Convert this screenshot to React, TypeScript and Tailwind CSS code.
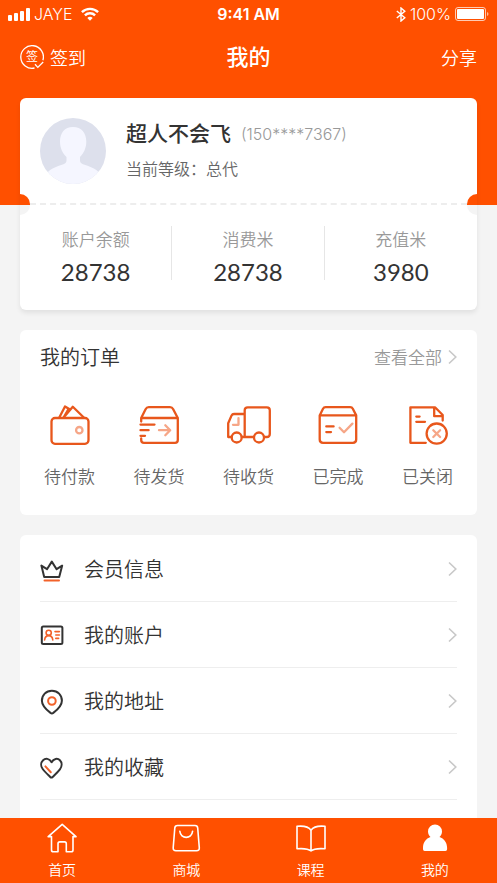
import type { ReactNode } from 'react';

const cjk = "font-['Noto_Sans_CJK_SC',sans-serif]";
const latin = "font-['Inter','Noto_Sans_CJK_SC',sans-serif]";

function OrderIcon({ width = 40, children }: { width?: number; children: ReactNode }) {
  return (
    <svg
      width={width}
      height={40}
      viewBox={`0 0 ${width} 40`}
      fill="none"
      stroke="#e8571c"
      strokeWidth={2.3}
      strokeLinecap="round"
      strokeLinejoin="round"
      aria-hidden="true"
    >
      {children}
    </svg>
  );
}

function RowIcon({ children }: { children: ReactNode }) {
  return (
    <svg
      width={24}
      height={24}
      viewBox="0 0 24 24"
      fill="none"
      stroke="#333333"
      strokeWidth={2}
      strokeLinecap="round"
      strokeLinejoin="round"
      className="shrink-0 overflow-visible"
      aria-hidden="true"
    >
      {children}
    </svg>
  );
}

function TabIcon({ children }: { children: ReactNode }) {
  return (
    <svg
      width={30}
      height={30}
      viewBox="0 0 30 30"
      fill="none"
      stroke="#ffffff"
      strokeWidth={1.6}
      strokeLinecap="round"
      strokeLinejoin="round"
      aria-hidden="true"
    >
      {children}
    </svg>
  );
}

function Chevron() {
  return (
    <svg width={9} height={16} viewBox="0 0 9 16" fill="none" stroke="#c8c8c8" strokeWidth={1.6} aria-hidden="true">
      <path d="M1 1.5 7.8 8 1 14.5" />
    </svg>
  );
}

const soft = '#f6a687';
const accent = '#f2622a';

const stats = [
  { label: '账户余额', value: '28738' },
  { label: '消费米', value: '28738' },
  { label: '充值米', value: '3980' },
];

const orders = [
  {
    label: '待付款',
    icon: (
      <OrderIcon>
        <rect x="1.5" y="13" width="37" height="25.8" rx="3.5" />
        <path d="M9.3 12.5 15 1.5l4.2 2.6M13.6 12.5 22.8 1.8 33.8 12.5M13.6 12.5l4.6-8" />
        <circle cx="29.3" cy="25.2" r="3.2" stroke={soft} />
      </OrderIcon>
    ),
  },
  {
    label: '待发货',
    icon: (
      <OrderIcon>
        <path d="M2.2 16.5V13L6.6 4.2Q7.6 2.2 9.8 2.2H31q2.2 0 3.2 2L38.8 13v22q0 2.8-2.8 2.8H5q-2.8 0-2.8-2.8v-1.5M2.2 13H38.8" />
        <path d="M1.5 19.6H15.5M1.5 25.2H9.6M1.5 30.8H6" />
        <path d="M20 25.2H31M26.3 20.2l4.9 5-4.9 5" stroke={soft} />
      </OrderIcon>
    ),
  },
  {
    label: '待收货',
    icon: (
      <OrderIcon width={44}>
        <path d="M4.7 32H1.2V18.3L4.6 10.4Q5.3 9 7 9H17.7M14.7 32H27M17.7 32V5.3q0-3 3-3H39.8q3 0 3 3V29q0 3-3 3H37" />
        <circle cx="9.7" cy="32.5" r="5" />
        <circle cx="32" cy="32.5" r="5" />
        <path d="M11.5 13.2V19.8H6" stroke={soft} />
      </OrderIcon>
    ),
  },
  {
    label: '已完成',
    icon: (
      <OrderIcon>
        <path d="M1.7 10.4 5 3.8Q5.8 2.2 7.6 2.2H32.2q1.8 0 2.6 1.6l3.4 6.6V34.5q0 3.3-3.3 3.3H5q-3.3 0-3.3-3.3ZM1.7 10.4H38.2" />
        <path d="M8.3 21.4H15.6M8.3 27.1H13" />
        <path d="M21.6 22.8 26 27.2 34.4 18.6" stroke={soft} />
      </OrderIcon>
    ),
  },
  {
    label: '已关闭',
    icon: (
      <OrderIcon>
        <path d="M17.8 37.8H2.4V2.3H27L34.7 10V15.5M26.2 2.6V11.2H34.5" />
        <path d="M8.3 11.6H11.6M8.3 16.8H17" />
        <circle cx="28.7" cy="28.6" r="10.1" />
        <path d="m25.3 25.2 6.8 6.8M32.1 25.2l-6.8 6.8" stroke={soft} />
      </OrderIcon>
    ),
  },
];

const rows = [
  {
    label: '会员信息',
    icon: (
      <RowIcon>
        <path d="M1.4 8.6 4.2 20H19.2L22.2 8.6 16.6 12.2 11.8 4.6 7 12.2Z" />
        <path d="M4.5 23.4H19" stroke={accent} />
      </RowIcon>
    ),
  },
  {
    label: '我的账户',
    icon: (
      <RowIcon>
        <rect x="1.8" y="3.6" width="20.6" height="17.4" rx="1.5" />
        <g stroke={accent} strokeWidth={1.6}>
          <circle cx="8.7" cy="9.8" r="2.6" />
          <path d="M4.6 17q.5-4.4 4.1-4.4t4.1 4.4M15 8.6H19.4M15.8 12H19.4M15.8 15.4H18.6" />
        </g>
      </RowIcon>
    ),
  },
  {
    label: '我的地址',
    icon: (
      <RowIcon>
        <path d="M11.9 1.8C6 1.8 1.9 6 1.9 11.7c0 5 5.2 9.6 8.6 12.2q1.4 1 2.8 0c3.4-2.6 8.6-7.2 8.6-12.2 0-5.7-4.1-9.9-10-9.9Z" />
        <circle cx="11.9" cy="12" r="3.8" stroke={accent} />
      </RowIcon>
    ),
  },
  {
    label: '我的收藏',
    icon: (
      <RowIcon>
        <path d="M11.6 7.2C9.4 3.2 5.4 3 3.1 5.2.6 7.6.7 11.4 2.7 14c2 2.7 4.9 5.4 7.5 8q1.2 1.2 2.4 0c2.6-2.6 5.3-5.1 7.3-7.7 2.1-2.8 2.4-6.5 0-9C17.7 3 13.6 3.4 11.6 7.2Z" />
        <path d="m5.4 11.4 5.4 5.8" stroke={accent} />
      </RowIcon>
    ),
  },
];

const tabs = [
  {
    label: '首页',
    icon: (
      <TabIcon>
        <path d="M1.2 13.6 15.2 1.3 29 13.6M1.2 13.6H4.5V27q0 1.8 1.8 1.8H11V20.7q0-1.8 1.8-1.8H17.5q1.8 0 1.8 1.8V28.8H24.2q1.8 0 1.8-1.8V13.6H29" />
      </TabIcon>
    ),
  },
  {
    label: '商城',
    icon: (
      <TabIcon>
        <path d="M6.5 2.5H24q2.5 0 2.7 2.5L28.3 24.7q.2 3-2.8 3H5q-3 0-2.8-3L3.8 5Q4 2.5 6.5 2.5Z" />
        <path d="M8.8 8.2c.8 8.2 12 8.2 12.8 0" />
      </TabIcon>
    ),
  },
  {
    label: '课程',
    icon: (
      <TabIcon>
        <path d="M1 3.3Q11.5 2.2 15 7.2 18.5 2.2 29 3.3V25.8Q18.5 25 15 28 11.5 25 1 25.8ZM15 7.2V28" />
      </TabIcon>
    ),
  },
  {
    label: '我的',
    active: true,
    icon: (
      <TabIcon>
        <path
          d="M15 1.4a7 7 0 0 1 7 7c0 2.3-1.2 4.2-2.5 5.5 4.5 1.5 7.6 5.5 7.6 10.8v1.6q0 1.7-1.7 1.7H4.7Q3 28 3 26.3v-1.6c0-5.3 3-9.3 7.5-10.8C9.2 12.6 8 10.7 8 8.4a7 7 0 0 1 7-7Z"
          fill="#ffffff"
          stroke="none"
        />
      </TabIcon>
    ),
  },
];

function StatusBar() {
  return (
    <div className={`grid h-7 grid-cols-3 items-center px-2 text-base leading-7 ${latin}`}>
      <div className="flex items-center gap-1">
        <svg width={22} height={13} viewBox="0 0 22 13" fill="#ffffff" aria-hidden="true">
          <rect x="0" y="7" width="4" height="6" rx="1" />
          <rect x="6" y="5" width="4" height="8" rx="1" />
          <rect x="12" y="3" width="4" height="10" rx="1" />
          <rect x="18" y="0" width="4" height="13" rx="1" />
        </svg>
        <span>JAYE</span>
        <svg width={18} height={14} viewBox="0 0 18 14" fill="none" stroke="#ffffff" strokeWidth={2.4} className="ml-1" aria-hidden="true">
          <path d="M.9 5.2a11.5 11.5 0 0 1 16.2 0M3.9 8.4a7.3 7.3 0 0 1 10.2 0" />
          <path d="M9 13.8 6.3 11a3.8 3.8 0 0 1 5.4 0Z" fill="#ffffff" stroke="none" />
        </svg>
      </div>
      <span className="text-center font-semibold">9:41 AM</span>
      <div className="flex items-center justify-end gap-1">
        <svg width={10} height={15} viewBox="0 0 10 15" fill="none" stroke="#ffffff" strokeWidth={1.4} className="shrink-0" aria-hidden="true">
          <path d="M.8 4 8.8 10.8 5 14V1L8.8 4.2.8 11" />
        </svg>
        <span>100%</span>
        <svg width={34} height={14} viewBox="0 0 34 14" fill="none" className="shrink-0" aria-hidden="true">
          <rect x=".5" y=".5" width="30" height="13" rx="2.5" stroke="#ffffff" strokeOpacity=".7" />
          <rect x="2" y="2" width="27" height="10" rx="1" fill="#ffffff" />
          <path d="M32 5v4q1.5-.5 1.5-2T32 5Z" fill="#ffffff" fillOpacity=".6" />
        </svg>
      </div>
    </div>
  );
}

export default function App() {
  return (
    <div className={`flex min-h-screen flex-col bg-[#f4f4f4] font-[350] text-[#333333] ${cjk}`}>
      <header className="bg-[#ff5000] pb-[119px] text-white">
        <StatusBar />
        <div className="grid h-[58px] grid-cols-3 items-center px-5 text-lg">
          <button type="button" className="flex items-center gap-[6px]">
            <span className="relative flex size-6 justify-center text-[12px] leading-[22px] font-normal">
              签
              <svg width={24} height={24} viewBox="0 0 24 24" fill="none" stroke="#ffffff" strokeWidth={1.3} className="absolute inset-0" aria-hidden="true">
                <path d="M14.5 23A11.3 11.3 0 1 1 22.9 15.3M15 19.2l2.8 3.2 5.4-5.4" />
              </svg>
            </span>
            <span>签到</span>
          </button>
          <h1 className="pb-1 text-center text-[22px] font-medium">我的</h1>
          <button type="button" className="justify-self-end">分享</button>
        </div>
      </header>

      <main className="-mt-[107px] flex grow flex-col gap-5 px-5">
        <section className="relative rounded-md bg-white shadow-[0_3px_5px_rgba(0,0,0,0.08)]">
          <div className="flex h-[107px] items-start gap-5 border-b-2 border-dashed border-[#ededed] p-5">
            <svg width={66} height={66} viewBox="0 0 66 66" className="shrink-0 rounded-full" role="img" aria-label="头像">
              <rect width="66" height="66" fill="#dde0ec" />
              <path
                d="M33 9c8.5 0 13.3 6 13.3 14.5 0 6.5-2.7 12-6.3 15.5v3.5c0 2 1 3 3 3.7 6 2 13 4.300 16.500 8.800V66H7V55c3.500-4.500 10.500-6.800 16.500-8.800 2-.7 3-1.700 3-3.700V39c-3.800-3.500-6.500-9-6.500-15.500C20 15 24.500 9 33 9Z"
                fill="#f5f6ff"
              />
            </svg>
            <div>
              <p className="flex items-center gap-[10px] leading-7">
                <strong className="text-[21px] font-medium">超人不会飞</strong>
                <span className={`pt-1 text-base font-light text-[#999999] ${latin}`}>(150****7367)</span>
              </p>
              <p className="mt-[10px] text-base leading-6 text-[#666666]">当前等级：总代</p>
            </div>
          </div>
          <div className="absolute top-24 left-0 h-[11px] w-[10px] rounded-tr-full bg-[#ff5000]" />
          <div className="absolute top-[107px] left-0 h-[10px] w-[10px] rounded-br-full bg-[#f4f4f4]" />
          <div className="absolute top-24 right-0 h-[11px] w-[10px] rounded-tl-full bg-[#ff5000]" />
          <div className="absolute top-[107px] right-0 h-[10px] w-[10px] rounded-bl-full bg-[#f4f4f4]" />
          <dl className="grid grid-cols-3 pt-[21px] pb-[22px]">
            {stats.map((s, i) => (
              <div key={s.label} className="flex">
                <div className="grow text-center">
                  <dt className="text-[17px] leading-[26px] text-[#999999]">{s.label}</dt>
                  <dd className="mt-1 font-['Lato',sans-serif] text-2xl leading-8 font-normal">{s.value}</dd>
                </div>
                {i < stats.length - 1 && <div className="h-[54px] w-px bg-[#e6e6e6]" />}
              </div>
            ))}
          </dl>
        </section>

        <section className="rounded-md bg-white px-5 pt-3 pb-[26px]">
          <div className="flex items-center justify-between leading-[30px]">
            <h2 className="text-xl font-[350]">我的订单</h2>
            <a href="#orders" className="flex items-center gap-[6px] text-[17px] text-[#999999]">
              查看全部
              <Chevron />
            </a>
          </div>
          <nav className="mt-[33px] flex justify-between px-1" aria-label="我的订单">
            {orders.map((o) => (
              <a key={o.label} href="#orders" className="flex flex-col items-center gap-[18px] text-[17px] leading-[26px] text-[#666666]">
                {o.icon}
                {o.label}
              </a>
            ))}
          </nav>
        </section>

        <section className="grow rounded-t-md bg-white px-5 pt-px">
          {rows.map((r) => (
            <a key={r.label} href="#menu" className="flex h-[66px] items-center gap-5 border-b border-[#eeeeee] text-xl">
              {r.icon}
              <span className="grow">{r.label}</span>
              <Chevron />
            </a>
          ))}
        </section>
      </main>

      <nav className="sticky bottom-0 flex bg-[#ff5000] pt-[5px] pb-1 text-sm leading-5 text-white" aria-label="主导航">
        {tabs.map((t) => (
          <a key={t.label} href="#tab" aria-current={t.active ? 'page' : undefined} className="flex flex-1 flex-col items-center gap-[6px]">
            {t.icon}
            {t.label}
          </a>
        ))}
      </nav>
    </div>
  );
}
